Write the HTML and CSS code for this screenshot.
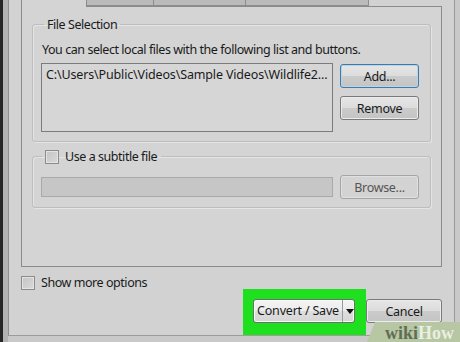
FILE: index.html
```html
<!DOCTYPE html>
<html lang="en">
<head>
  <meta charset="UTF-8" />
  <title>Open Media</title>
  <link rel="stylesheet" href="styles.css">
</head>
<body>

  <div class="strip-dark"></div>
  <div class="strip-mid"></div>

  <div id="dialog">
    <div class="tabs">
      <div class="tab active"></div>
      <div class="tab t2"></div>
      <div class="tab t3"></div>
      <div class="tab t4"></div>
    </div>

    <div id="pane">
      <fieldset class="group files">
        <legend>File Selection</legend>
        <p class="hint">You can select local files with the following list and buttons.</p>
        <div class="row">
          <div class="file-list">C:\Users\Public\Videos\Sample Videos\Wildlife2...</div>
          <div class="side-buttons">
            <button class="btn default">Add...</button>
            <button class="btn">Remove</button>
          </div>
        </div>
      </fieldset>

      <fieldset class="group subs">
        <legend><span class="check"></span>Use a subtitle file</legend>
        <div class="row mid">
          <div class="text-input"></div>
          <button class="btn disabled">Browse...</button>
        </div>
      </fieldset>
    </div>

    <div class="options"><span class="check"></span>Show more options</div>

    <div class="footer">
      <div class="highlight">
        <div class="split-btn">
          <span class="split-main">Convert / Save</span>
          <span class="split-arrow"></span>
        </div>
      </div>
      <button class="btn cancel">Cancel</button>
    </div>
  </div>

  <div class="watermark"><span class="wiki">wiki</span><span class="how">How</span></div>

</body>
</html>
```

FILE: styles.css
```css
body {
  margin: 0;
  width: 460px;
  height: 342px;
  overflow: hidden;
  display: flex;
  align-items: flex-start;
  background: #c9c9c9;
  font-family: "Noto Sans", "Open Sans", sans-serif;
  font-size: 12.5px;
  letter-spacing: -0.45px;
  color: #1a1a1a;
  position: relative;
}

.strip-dark {
  width: 3px;
  height: 342px;
  background: #262626;
}

.strip-mid {
  width: 5px;
  height: 342px;
  background: #b3b3b3;
}

#dialog {
  width: 433px;
  height: 335px;
  padding-left: 12px;
  background: #d2d2d2;
  border-left: 1px solid #8f8f8f;
  border-right: 1px solid #9a9a9a;
  border-bottom: 1px solid #9c9c9c;
  display: flex;
  flex-direction: column;
}

/* tab strip, only its bottom edge is visible */
.tabs {
  display: flex;
  height: 6px;
  width: 421px;
}

.tab {
  height: 5px;
  background: #bababa;
  border: 1px solid #8d8d8d;
  border-top: none;
  border-left: none;
}

.tab.active {
  position: relative;
  width: 64px;
  height: 7px;
  margin-bottom: -1px;
  background: #d4d4d4;
  border: 1px solid #8b8b8b;
  border-top: none;
  border-bottom: none;
}

.t2 { width: 66px; }
.t3 { width: 91px; }
.t4 { width: 122px; }

#pane {
  width: 419px;
  height: 260px;
  background: #d4d4d4;
  border: 1px solid #8b8b8b;
}

.group {
  margin: 10px 10px 0;
  padding: 0 10px 9px 8px;
  border: 1px solid #bdbdbd;
  border-radius: 3px;
  box-shadow: inset 1px 1px 0 #e4e4e4, 1px 1px 0 #e4e4e4;
  min-width: 0;
}

.group legend {
  padding: 0 3px;
  margin-left: 3px;
  line-height: 15px;
  display: flex;
  align-items: center;
}

.hint {
  margin: 10px 0 6px 1px;
  line-height: 15px;
}

.row {
  display: flex;
  gap: 7px;
}

.row.mid {
  align-items: center;
  margin-top: 11px;
}

.files {
  padding-bottom: 9px;
}

.file-list {
  width: 282px;
  height: 61px;
  padding: 3px 4px;
  border: 1px solid #7b7b7b;
  background: #d6d6d6;
  white-space: nowrap;
  overflow: hidden;
  line-height: 15px;
  letter-spacing: -0.15px;
}

.side-buttons {
  display: flex;
  flex-direction: column;
  gap: 8px;
  padding-top: 1px;
}

.btn {
  width: 79px;
  height: 24px;
  padding: 0;
  font-family: inherit;
  font-size: 12.5px;
  letter-spacing: -0.3px;
  color: #1a1a1a;
  border: 1px solid #7a7a7a;
  border-radius: 3px;
  background: linear-gradient(#e6e6e6 0%, #dcdcdc 50%, #cbcbcb 51%, #c4c4c4 100%);
  box-shadow: inset 0 0 0 1px #ececec;
}

.btn.default {
  border-color: #3f7ba8;
  box-shadow: inset 0 0 0 1px #b9d4e6;
}

.btn.disabled {
  color: #555;
  border-color: #a5a5a5;
  background: #d3d3d3;
  box-shadow: inset 0 0 0 1px #e0e0e0;
}

.subs {
  margin-top: 7px;
  padding-bottom: 8px;
}

.subs legend {
  margin-left: 1px;
  padding: 0 4px 0 3px;
}

.text-input {
  width: 290px;
  height: 18px;
  background: #c6c6c6;
  border: 1px solid #a9a9a9;
}

.check {
  display: inline-block;
  width: 12px;
  height: 12px;
  margin-right: 6px;
  border: 1px solid #8c8c8c;
  background: linear-gradient(135deg, #c4c4c4, #dadada);
  box-shadow: inset 0 0 0 1px #e3e3e3;
  flex: none;
}

.options {
  display: flex;
  align-items: center;
  height: 14px;
  margin-top: 9px;
  line-height: 14px;
}

.footer {
  display: flex;
  justify-content: flex-end;
  align-items: flex-start;
  width: 421px;
  margin-top: -1px;
}

.highlight {
  padding: 10px 11px 12px 10px;
  background: #1fe01f;
}

.split-btn {
  display: flex;
  width: 100px;
  height: 22px;
  border: 1px solid #6e6e6e;
  border-radius: 3px;
  background: linear-gradient(#f4f4f4 0%, #ececec 50%, #dedede 51%, #d6d6d6 100%);
  box-shadow: inset 0 0 0 1px #fafafa;
  letter-spacing: -0.2px;
}

.split-main {
  width: 88px;
  line-height: 22px;
  text-align: center;
  border-right: 1px solid #9a9a9a;
}

.split-arrow {
  flex: 1;
  position: relative;
}

.split-arrow::after {
  content: "";
  position: absolute;
  left: 3px;
  top: 9px;
  border-left: 4px solid transparent;
  border-right: 4px solid transparent;
  border-top: 5px solid #111;
}

.btn.cancel {
  width: 76px;
  margin-top: 10px;
}

.watermark {
  position: absolute;
  right: 0;
  bottom: 0;
  width: 93px;
  height: 20px;
  padding-left: 18px;
  box-sizing: border-box;
  background: #b7c6a3;
  clip-path: polygon(8px 0, 100% 0, 100% 100%, 0 100%);
  font-family: "Liberation Serif", "DejaVu Serif", serif;
  font-weight: bold;
  font-size: 18px;
  letter-spacing: 0;
  line-height: 22px;
  white-space: nowrap;
}

.wiki { color: #5f6d55; }
.how { color: #e9efe1; }
```
